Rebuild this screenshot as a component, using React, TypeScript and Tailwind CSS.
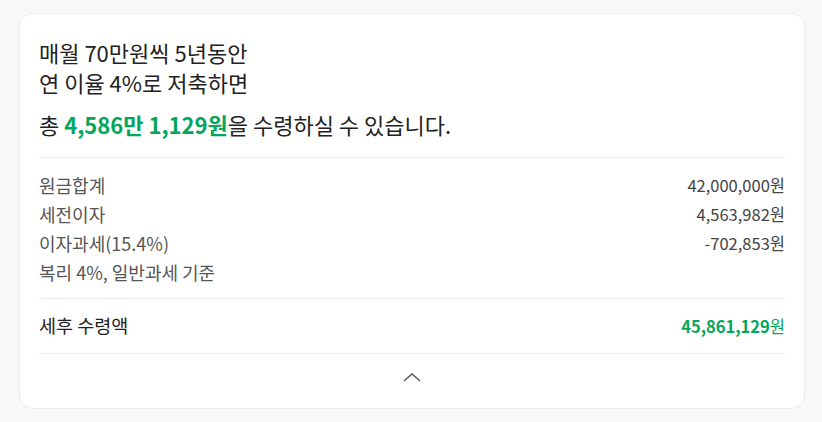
const rows = [
  { label: "원금합계", value: "42,000,000원" },
  { label: "세전이자", value: "4,563,982원" },
  { label: "이자과세(15.4%)", value: "-702,853원" },
];

export default function App() {
  return (
    <div
      className="min-h-screen bg-[#f8f8f8] pl-[19px] pt-[13px]"
      style={{ fontFamily: '"Noto Sans CJK KR", "Noto Sans", sans-serif' }}
    >
      <div className="w-[786px] h-[396px] rounded-[14px] border border-[#ececec] bg-white px-[19px]">
        <div className="pt-[23px] pb-[18px] border-b border-[#ececec]">
          <div className="text-[22px] leading-[30px] text-[#222]">매월 70만원씩 5년동안</div>
          <div className="text-[22px] leading-[30px] text-[#222]">연 이율 4%로 저축하면</div>
          <div className="mt-[12px] text-[22px] leading-[30px] text-[#222]">
            총 <span className="font-bold text-[#03a65a]">4,586만 1,129원</span>을 수령하실 수 있습니다.
          </div>
        </div>

        <div className="pt-[13px] pb-[11px] border-b border-[#ececec]">
          {rows.map((r) => (
            <div key={r.label} className="flex h-[29px] items-center justify-between">
              <span className="text-[18px] text-[#555]">{r.label}</span>
              <span className="text-[16.5px] text-[#444]">{r.value}</span>
            </div>
          ))}
          <div className="flex h-[29px] items-center text-[18px] text-[#555]">복리 4%, 일반과세 기준</div>
        </div>

        <div className="flex h-[55px] items-center justify-between border-b border-[#ececec]">
          <span className="text-[18.5px] text-[#222]">세후 수령액</span>
          <span className="text-[16.5px] text-[#03a65a]">
            <span className="font-bold">45,861,129</span>원
          </span>
        </div>

        <div className="flex justify-center pt-[17px]">
          <svg width="20" height="12" viewBox="0 0 20 12" fill="none">
            <path d="M2 10 L10 3 L18 10" stroke="#555" strokeWidth="1.4" />
          </svg>
        </div>
      </div>
    </div>
  );
}
